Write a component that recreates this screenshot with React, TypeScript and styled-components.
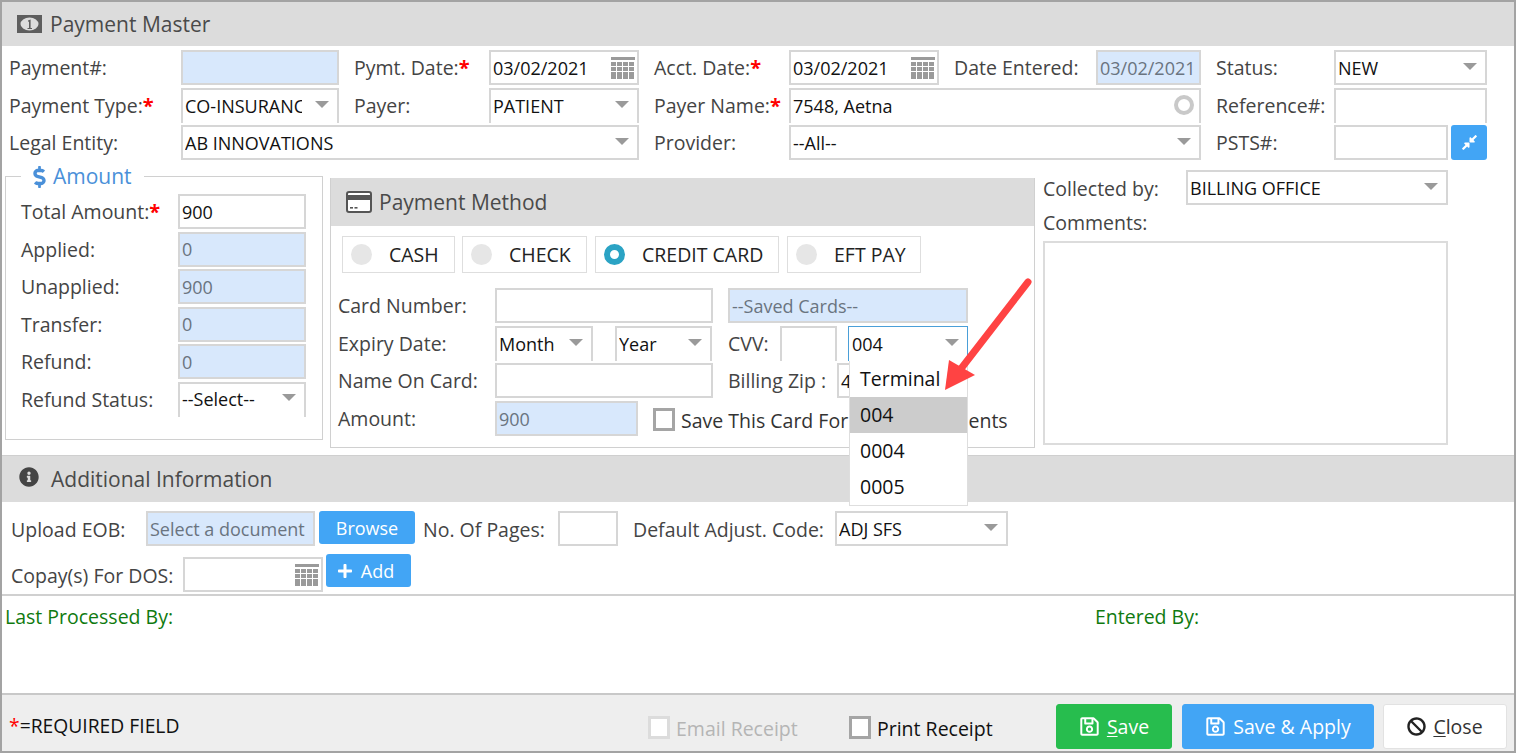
import React from 'react';
import styled, { createGlobalStyle } from 'styled-components';
import { FaInfoCircle, FaDollarSign, FaPlus, FaRegSave, FaBan, FaCompressAlt } from 'react-icons/fa';

const Global = createGlobalStyle`
  html, body { margin: 0; padding: 0; background: #fff; }
  body { font-family: "Open Sans", "Liberation Sans", sans-serif; font-size: 19.5px; color: #444; overflow: hidden; }
  * { box-sizing: border-box; }
`;

const Frame = styled.div`
  position: relative; width: 1516px; height: 753px; border: 2px solid #a3a3a3;
  display: flex; flex-direction: column; background: #fff; overflow: hidden;
`;
const PanelHeader = styled.div<{ $h?: number; $pb?: number }>`
  height: ${p => p.$h ?? 44}px; flex: none; background: #dcdcdc; display: flex; align-items: center;
  font-size: 21px; color: #4a4a4a; gap: 8px; padding-left: 15px; padding-bottom: ${p => p.$pb ?? 1}px;
`;
const TopForm = styled.div`
  display: grid; padding-top: 4px; flex: none;
  grid-template-columns: 179px 158px 15px 135px 150px 15px 135px 150px 15px 142px 105px 15px 118px 153px;
  grid-template-rows: 38px 37px 35px;
`;
const Label = styled.div<{ $w?: number; $pad?: number; $lh?: number }>`
  ${p => (p.$w ? `width:${p.$w}px; flex:none;` : '')}
  ${p => (p.$pad ? `padding-left:${p.$pad}px;` : '')}
  height: 35px; line-height: ${p => p.$lh ?? 35}px; color: #444; white-space: nowrap;
`;
const Star = styled.span` color: #f00; font-weight: 700; font-size: 20px; `;
const Gap = styled.div``;
const Field = styled.div<{ $w?: number; $tone?: 'ro'; $open?: boolean; $focus?: boolean; $span?: number }>`
  ${p => (p.$w ? `width:${p.$w}px; flex:none;` : '')}
  ${p => (p.$span ? `grid-column: span ${p.$span};` : '')}
  height: 35px; padding: 0 3px 0 2px; display: flex; align-items: center; white-space: nowrap; font-size: 18px;
  border: 2px solid ${p => (p.$focus ? '#4a9fd8' : '#d6d6d6')};
  ${p => (p.$focus ? 'border-width: 1px; padding-left: 3px;' : '')}
  ${p => (p.$open ? 'border-bottom-color: transparent; border-bottom-width: 0;' : '')}
  ${p => (p.$open && !p.$focus ? 'padding-bottom: 2px;' : '')}
  background: ${p => (p.$tone === 'ro' ? '#d8e8fc' : '#fff')};
  color: ${p => (p.$tone === 'ro' ? '#6a7480' : '#111')};
  overflow: hidden;
`;
const FieldText = styled.span` flex: 1; min-width: 0; overflow: hidden; `;
const Caret = styled.span`
  flex: none; margin: 0 5px 3px 13px; width: 0; height: 0;
  border-left: 7px solid transparent; border-right: 7px solid transparent; border-top: 7px solid #9a9a9a;
`;
const Ring = styled.span`
  flex: none; width: 20px; height: 20px; border-radius: 50%; border: 4px solid #c9c9c9; margin: 0 2px 2px 0;
`;
const SquareBtn = styled.div`
  width: 36px; height: 35px; margin-left: 3px; flex: none; background: #42a5f5; border-radius: 3px; color: #fff;
  display: flex; align-items: center; justify-content: center; font-size: 17px;
`;
const Inline = styled.div` display: flex; `;

const Middle = styled.div` height: 295px; flex: none; display: flex; align-items: flex-start; `;
const AmountBox = styled.fieldset`
  margin: 3px 0 0 3px; width: 318px; height: 277px; border: 1px solid #d0d0d0; padding: 0 0 0 15px; min-width: 0;
`;
const AmountLegend = styled.legend`
  padding: 0 12px; font-size: 21px; color: #4a90d9; line-height: 27px; display: flex; align-items: center; gap: 7px;
`;
const Dollar = styled(FaDollarSign)` width: 13px; height: 22px; flex: none; `;
const AmountRows = styled.div` display: grid; grid-template-columns: 157px 128px; grid-auto-rows: 37.6px; margin-top: 4px; `;
const MethodPanel = styled.div`
  margin: 18px 0 0 7px; width: 705px; height: 270px; border: 1px solid #d0d0d0; border-top: 0; flex: none;
`;
const MethodHeader = styled(PanelHeader)` padding-left: 15px; gap: 7px; `;
const RadioRow = styled.div` display: flex; padding: 10px 0 0 11px; gap: 7px; height: 62px; `;
const RadioBox = styled.div<{ $w: number; $mr?: number }>`
  width: ${p => p.$w}px; height: 37px; border: 1px solid #dedede; display: flex; align-items: center; padding-left: 8px; color: #222;
  flex: none; margin-right: ${p => p.$mr ?? 0}px;
`;
const RadioDot = styled.span<{ $on?: boolean }>`
  width: 21px; height: 21px; border-radius: 50%; margin-right: 17px; flex: none;
  background: ${p => (p.$on ? '#fff' : '#e6e6e6')};
  border: ${p => (p.$on ? '6px solid #2ba3c4' : '0')};
`;
const MethodRow = styled.div<{ $h: number }>` display: flex; height: ${p => p.$h}px; padding-left: 7px; `;
const Spacer = styled.div<{ $w: number }>` width: ${p => p.$w}px; flex: none; `;
const Check = styled.span<{ $off?: boolean }>`
  width: 22px; height: 23px; flex: none; background: #fff; border: 3px solid ${p => (p.$off ? '#dcdcdc' : '#a5a5a5')}; display: inline-block; margin-top: -2px;
`;
const CheckLine = styled.div<{ $off?: boolean; $dark?: boolean; $w?: number; $mt?: number }>`
  display: flex; align-items: center; gap: 6px; height: 35px; white-space: nowrap;
  ${p => (p.$w ? `width:${p.$w}px;` : '')}
  margin-top: ${p => p.$mt ?? 0}px;
  color: ${p => (p.$off ? '#b5b5b5' : p.$dark ? '#111' : '#333')};
`;
const RightCol = styled.div` margin: 10px 0 0 8px; width: 405px; flex: none; `;
const CollectedRow = styled.div` display: flex; height: 34px; `;
const CommentsLabel = styled.div` height: 37px; line-height: 38px; `;
const CommentsBox = styled.div` height: 204px; border: 2px solid #dcdcdc; `;

const Additional = styled.div` border-top: 1px solid #cfcfcf; flex: none; `;
const AddRow = styled.div<{ $h: number }>` display: flex; height: ${p => p.$h}px; padding-left: 9px; `;
const AddRowsWrap = styled.div` padding-top: 9px; flex: none; `;
const Btn = styled.div<{ $w: number; $up?: number; $pr?: number }>`
  width: ${p => p.$w}px; height: 33px; background: #42a5f5; border-radius: 3px; color: #fff; flex: none; font-size: 18px;
  display: flex; align-items: center; justify-content: center; gap: 8px; margin-top: ${p => -(p.$up ?? 0)}px;
  padding-right: ${p => p.$pr ?? 0}px;
`;
const Info = styled.div`
  flex: 1; border-top: 2px solid #d0d0d0; display: flex; padding: 8px 0 0 3px; color: #0f7a0f;
`;
const InfoCol = styled.div<{ $w: number }>` width: ${p => p.$w}px; height: 26px; line-height: 26px; flex: none; `;
const Footer = styled.div`
  height: 58px; flex: none; background: #eeeeee; border-top: 2px solid #c8c8c8; display: flex; align-items: flex-start; padding-left: 7px;
`;
const Req = styled.div` width: 639px; flex: none; font-size: 19.3px; color: #111; margin-top: 20px; line-height: 22px; `;
const ReqStar = styled.span` color: #f00; `;
const FootChecks = styled.div` display: flex; margin-top: 16px; `;
const FootBtn = styled.div<{ $w: number; $bg: string; $fg: string }>`
  width: ${p => p.$w}px; height: 45px; margin-top: 9px; background: ${p => p.$bg}; color: ${p => p.$fg}; border-radius: 3px;
  display: flex; align-items: center; justify-content: center; gap: 7px; flex: none;
  border: 1px solid ${p => (p.$bg === '#fff' ? '#e2e2e2' : p.$bg)};
`;
const Under = styled.span` text-decoration: underline; text-underline-offset: 2px; `;
const Dropdown = styled.div`
  position: absolute; left: 847px; top: 359px; width: 119px; background: #fff; border: 1px solid #dedede; border-top: 0; z-index: 3;
`;
const Option = styled.div<{ $sel?: boolean }>`
  height: 36px; line-height: 36px; padding-left: 10px; color: #111; background: ${p => (p.$sel ? '#cccccc' : '#fff')};
`;
const ArrowWrap = styled.svg` position: absolute; left: 928px; top: 268px; z-index: 4; `;
const CalIcon = styled.svg` flex: none; margin-right: -2px; `;
const InfoIcon = styled(FaInfoCircle)` margin: 0 4px 4px 2px; `;

const Calendar = () => (
  <CalIcon width={26} height={24} viewBox="0 0 26 24" fill="#9a9a9a">
    <rect x="1" y="1" width="24" height="3" />
    {[6, 11, 16, 20].map(y => [1, 7, 13, 19].map(x => (
      <rect key={`${x}-${y}`} x={x} y={y} width={5} height={y === 20 ? 3 : 4} />
    )))}
  </CalIcon>
);
const CalField = ({ v, w }: { v?: string; w?: number }) => (
  <Field $w={w}><FieldText>{v}</FieldText><Calendar /></Field>
);
const Select = (p: { v: string; w?: number; span?: number; open?: boolean; focus?: boolean }) => (
  <Field $w={p.w} $span={p.span} $open={p.open} $focus={p.focus}><FieldText>{p.v}</FieldText><Caret /></Field>
);
const CardIcon = () => (
  <svg width="26" height="22" viewBox="0 0 26 22" style={{ flex: 'none' }}>
    <rect x="1" y="1" width="24" height="20" rx="2" fill="#fff" stroke="#555" strokeWidth="2" />
    <rect x="1" y="4" width="24" height="5" fill="#555" />
    <rect x="4" y="16" width="3" height="1.6" fill="#555" /><rect x="8.5" y="16" width="3" height="1.6" fill="#555" />
  </svg>
);
const MoneyIcon = () => (
  <svg width="25" height="18" viewBox="0 0 25 18" style={{ flex: 'none' }}>
    <rect width="25" height="18" fill="#5e5e5e" />
    <ellipse cx="12.5" cy="9" rx="9" ry="6.5" fill="#dcdcdc" />
    <path d="M11 5.5 L13.6 4.5 V13 H15 V14 H10.5 V13 H12 V6.4 L11 6.8 Z" fill="#5e5e5e" />
  </svg>
);

export default function App() {
  return (
    <Frame>
      <Global />
      <PanelHeader><MoneyIcon />Payment Master</PanelHeader>
      <TopForm>
        <Label $pad={7}>Payment#:</Label><Field $tone="ro" />
        <Gap /><Label>Pymt. Date:<Star>*</Star></Label><CalField v="03/02/2021" />
        <Gap /><Label>Acct. Date:<Star>*</Star></Label><CalField v="03/02/2021" />
        <Gap /><Label>Date Entered:</Label><Field $tone="ro">03/02/2021</Field>
        <Gap /><Label>Status:</Label><Select v="NEW" />

        <Label $pad={7}>Payment Type:<Star>*</Star></Label><Select v="CO-INSURANCE" open />
        <Gap /><Label>Payer:</Label><Select v="PATIENT" open />
        <Gap /><Label>Payer Name:<Star>*</Star></Label>
        <Field $span={4} $open><FieldText>7548, Aetna</FieldText><Ring /></Field>
        <Gap /><Label>Reference#:</Label><Field $open />

        <Label $pad={7}>Legal Entity:</Label><Select v="AB INNOVATIONS" span={4} />
        <Gap /><Label>Provider:</Label>
        <Select v="--All--" span={4} />
        <Gap /><Label>PSTS#:</Label>
        <Inline><Field $w={114} /><SquareBtn><FaCompressAlt /></SquareBtn></Inline>
      </TopForm>

      <Middle>
        <AmountBox>
          <AmountLegend><Dollar />Amount</AmountLegend>
          <AmountRows>
            <Label>Total Amount:<Star>*</Star></Label><Field>900</Field>
            <Label>Applied:</Label><Field $tone="ro">0</Field>
            <Label>Unapplied:</Label><Field $tone="ro">900</Field>
            <Label>Transfer:</Label><Field $tone="ro">0</Field>
            <Label>Refund:</Label><Field $tone="ro">0</Field>
            <Label $lh={36}>Refund Status:</Label><Select v="--Select--" open />
          </AmountRows>
        </AmountBox>

        <MethodPanel>
          <MethodHeader $h={48}><CardIcon />Payment Method</MethodHeader>
          <RadioRow>
            <RadioBox $w={113}><RadioDot />CASH</RadioBox>
            <RadioBox $w={125} $mr={1}><RadioDot />CHECK</RadioBox>
            <RadioBox $w={184} $mr={1}><RadioDot $on />CREDIT CARD</RadioBox>
            <RadioBox $w={134}><RadioDot />EFT PAY</RadioBox>
          </RadioRow>
          <MethodRow $h={38}>
            <Label $w={157}>Card Number:</Label><Field $w={218} /><Spacer $w={15} />
            <Field $w={240} $tone="ro">--Saved Cards--</Field>
          </MethodRow>
          <MethodRow $h={37}>
            <Label $w={157}>Expiry Date:</Label><Select v="Month" w={98} open /><Spacer $w={22} />
            <Select v="Year" w={97} open /><Spacer $w={16} />
            <Label $w={52}>CVV:</Label><Field $w={57} $open /><Spacer $w={11} />
            <Select v="004" w={120} focus open />
          </MethodRow>
          <MethodRow $h={38}>
            <Label $w={157}>Name On Card:</Label><Field $w={218} /><Spacer $w={15} />
            <Label $w={109}>Billing Zip :</Label><Field $w={131}>4</Field>
          </MethodRow>
          <MethodRow $h={35}>
            <Label $w={157}>Amount:</Label><Field $w={143} $tone="ro">900</Field><Spacer $w={15} />
            <CheckLine $mt={2}><Check />Save This Card For Future Payments</CheckLine>
          </MethodRow>
        </MethodPanel>

        <RightCol>
          <CollectedRow><Label $w={143} $lh={37}>Collected by:</Label><Select v="BILLING OFFICE" w={262} /></CollectedRow>
          <CommentsLabel>Comments:</CommentsLabel>
          <CommentsBox />
        </RightCol>
      </Middle>

      <Additional>
        <PanelHeader $h={46} $pb={0}><InfoIcon size={20} color="#444" />Additional Information</PanelHeader>
      </Additional>
      <AddRowsWrap>
        <AddRow $h={46}>
          <Label $w={135} $lh={37}>Upload EOB:</Label>
          <Field $w={169} $tone="ro">Select a document</Field><Spacer $w={4} />
          <Btn $w={96}>Browse</Btn><Spacer $w={8} />
          <Label $w={135} $lh={37}>No. Of Pages:</Label><Field $w={60} /><Spacer $w={15} />
          <Label $w={202} $lh={37}>Default Adjust. Code:</Label><Select v="ADJ SFS" w={173} />
        </AddRow>
        <AddRow $h={37}>
          <Label $w={172} $lh={37}>Copay(s) For DOS:</Label>
          <CalField w={140} /><Spacer $w={3} />
          <Btn $w={85} $up={3} $pr={6}><FaPlus size={16} />Add</Btn>
        </AddRow>
      </AddRowsWrap>
      <Info>
        <InfoCol $w={1090}>Last Processed By:</InfoCol>
        <InfoCol $w={200}>Entered By:</InfoCol>
      </Info>
      <Footer>
        <Req><ReqStar>*</ReqStar>=REQUIRED FIELD</Req>
        <FootChecks>
          <CheckLine $off $w={201}><Check $off />Email Receipt</CheckLine>
          <CheckLine $dark $w={207}><Check />Print Receipt</CheckLine>
        </FootChecks>
        <FootBtn $w={116} $bg="#27bd4e" $fg="#fff"><FaRegSave size={21} /><span><Under>S</Under>ave</span></FootBtn>
        <Spacer $w={10} />
        <FootBtn $w={192} $bg="#42a5f5" $fg="#fff"><FaRegSave size={21} />Save &amp; Apply</FootBtn>
        <Spacer $w={9} />
        <FootBtn $w={124} $bg="#fff" $fg="#333"><FaBan size={19} color="#222" /><span><Under>C</Under>lose</span></FootBtn>
      </Footer>

      <Dropdown>
        <Option>Terminal</Option>
        <Option $sel>004</Option>
        <Option>0004</Option>
        <Option>0005</Option>
      </Dropdown>
      <ArrowWrap width="110" height="125" viewBox="0 0 110 125">
        <line x1="98" y1="12" x2="30" y2="100" stroke="#ff4343" strokeWidth="7" strokeLinecap="round" />
        <polygon points="15,120 19,90 45,105" fill="#ff4343" />
      </ArrowWrap>
    </Frame>
  );
}
